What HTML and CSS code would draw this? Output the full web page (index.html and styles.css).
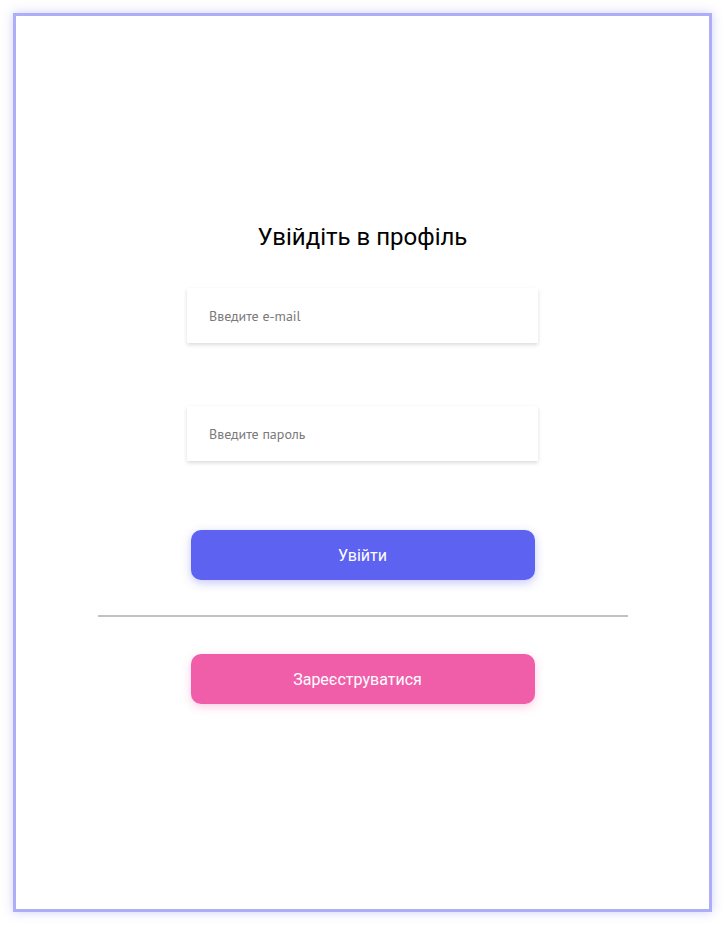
FILE: index.html
```html
<!DOCTYPE html>
<html lang="uk">
<head>
<meta charset="utf-8">
<title>Увійдіть в профіль</title>
<link rel="stylesheet" href="styles.css">
</head>
<body>
<main class="frame">
  <form class="login">
    <h1 class="title">Увійдіть в профіль</h1>
    <div class="field"><input class="input" type="email" placeholder="Введите e-mail"></div>
    <div class="field"><input class="input" type="password" placeholder="Введите пароль"></div>
    <button type="button" class="btn btn-primary">Увійти</button>
    <hr class="divider">
    <button type="button" class="btn btn-pink">Зареєструватися</button>
  </form>
</main>
</body>
</html>
```
FILE: styles.css
```css
html, body {
  margin: 0;
  padding: 0;
  background: #ffffff;
}
body {
  padding: 13px 14px 15px 13px;
  font-family: Roboto, "Liberation Sans", Arial, sans-serif;
}
.frame {
  box-sizing: border-box;
  width: 699px;
  height: 899px;
  border: 3px solid #aeaef8;
  box-shadow: 0 0 10px rgba(150, 150, 245, 0.45);
  background: #fff;
}
.login {
  display: flex;
  flex-direction: column;
  align-items: center;
  padding-top: 205px;
}
.title {
  margin: 0 0 35px;
  font-weight: 400;
  font-size: 24px;
  line-height: 32px;
  color: #000;
}
.field {
  width: 351px;
  margin-bottom: 63px;
}
.input {
  box-sizing: border-box;
  width: 100%;
  height: 55px;
  border: none;
  outline: none;
  padding: 0 22px;
  background: #fff;
  box-shadow: 0 2px 4px rgba(0, 0, 0, 0.14);
  font-family: "PT Sans", "Noto Sans", "Open Sans", sans-serif;
  font-size: 14px;
  color: #333;
}
.input::placeholder {
  color: #7a7a7a;
}
.field:nth-child(3) {
  margin-bottom: 69px;
}
.btn {
  width: 344px;
  height: 50px;
  border: none;
  border-radius: 10px;
  font-family: Roboto, "Liberation Sans", sans-serif;
  font-size: 16px;
  color: #fff;
  cursor: pointer;
}
.btn-primary {
  background: #5e62f0;
  box-shadow: 0 3px 10px rgba(94, 98, 240, 0.35);
}
.btn-pink {
  padding-right: 16px;
  background: #f05eaa;
  box-shadow: 0 3px 10px rgba(240, 94, 170, 0.3);
}
.divider {
  width: 530px;
  height: 2px;
  margin: 35px 0 37px;
  border: none;
  background: #c2c2c2;
}
```
